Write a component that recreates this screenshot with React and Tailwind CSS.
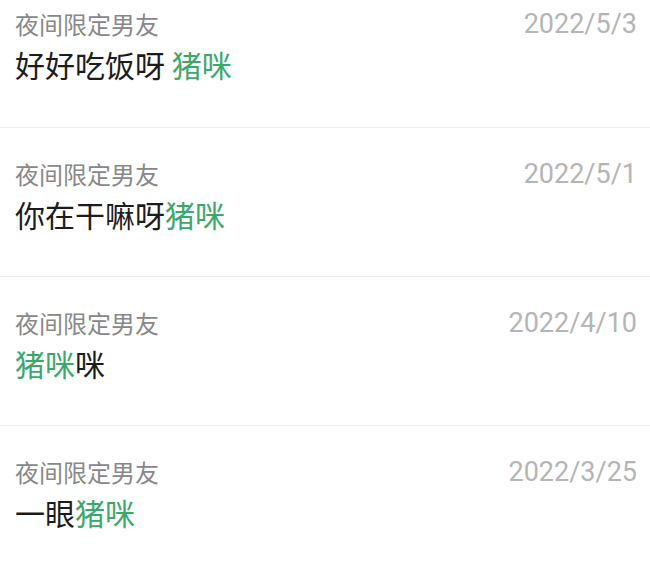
const items = [
  { date: "2022/5/3", parts: [["好好吃饭呀 ", false], ["猪咪", true]] },
  { date: "2022/5/1", parts: [["你在干嘛呀", false], ["猪咪", true]] },
  { date: "2022/4/10", parts: [["猪咪", true], ["咪", false]] },
  { date: "2022/3/25", parts: [["一眼", false], ["猪咪", true]] },
];

const Row = ({ item, first }) => (
  <div
    className={`border-b border-[#efefef] pl-[15px] pr-[13px] ${
      first ? "h-[128px] pt-[8px]" : "h-[149px] pt-[30px]"
    }`}
  >
    <div className="flex items-start justify-between">
      <span className="text-[24px] leading-[32px] text-[#888888]">夜间限定男友</span>
      <span className="text-[27px] leading-[32px] text-[#b5b5b5] font-['Roboto','Noto_Sans_CJK_SC',sans-serif]">
        {item.date}
      </span>
    </div>
    <div className="mt-[5px] text-[30px] leading-[38px] text-[#1c1c1c]">
      {item.parts.map(([t, green], i) => (
        <span key={i} className={green ? "text-[#3aa86b]" : ""}>
          {t}
        </span>
      ))}
    </div>
  </div>
);

export default function App() {
  return (
    <div className="w-[650px] h-[570px] overflow-hidden bg-white font-['Noto_Sans_CJK_SC',sans-serif]">
      {items.map((item, i) => (
        <Row key={i} item={item} first={i === 0} />
      ))}
    </div>
  );
}
